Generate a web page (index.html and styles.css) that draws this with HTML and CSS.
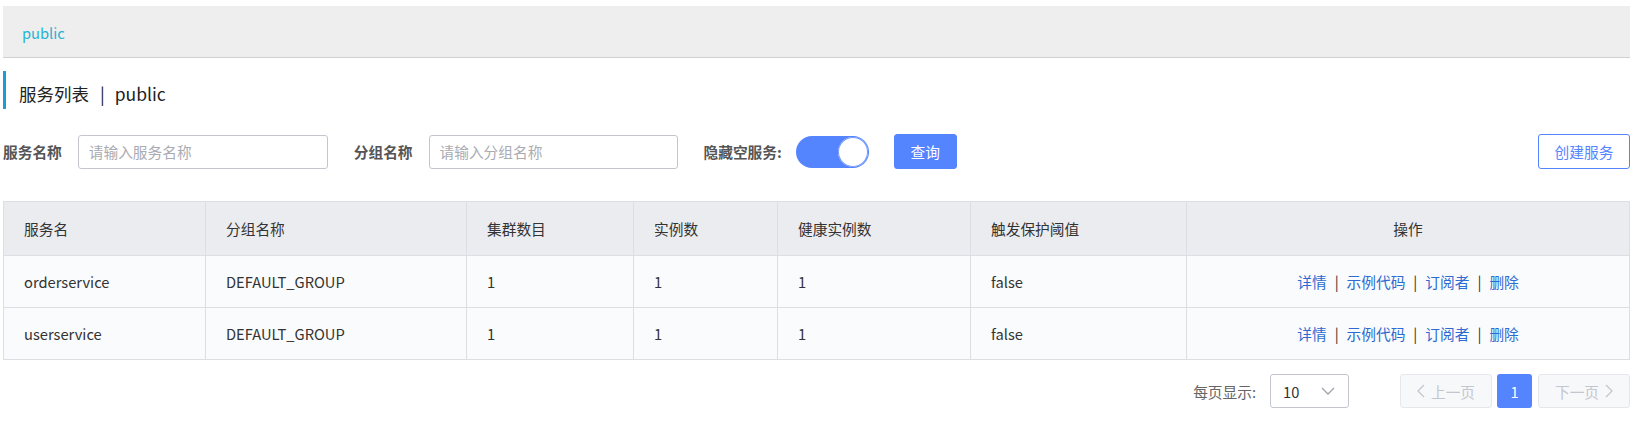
FILE: index.html
```html
<!DOCTYPE html>
<html lang="zh-CN">
<head>
<meta charset="utf-8">
<title>服务列表</title>
<link rel="stylesheet" href="styles.css">
</head>
<body>
<div class="page">
  <div class="crumb"><span class="ns">public</span></div>

  <div class="title">服务列表<span class="title-sep">|</span>public</div>

  <div class="filters">
    <div class="field">
      <span class="label">服务名称</span>
      <input class="input input-a" type="text" placeholder="请输入服务名称">
    </div>
    <div class="field">
      <span class="label">分组名称</span>
      <input class="input input-b" type="text" placeholder="请输入分组名称">
    </div>
    <div class="field field-switch">
      <span class="label">隐藏空服务:</span>
      <span class="switch"><span class="knob"></span></span>
    </div>
    <button class="btn btn-primary">查询</button>
    <div class="spacer"></div>
    <button class="btn btn-outline">创建服务</button>
  </div>

  <table class="grid">
    <colgroup>
      <col style="width:202px">
      <col style="width:261px">
      <col style="width:167px">
      <col style="width:144px">
      <col style="width:193px">
      <col style="width:216px">
      <col>
    </colgroup>
    <thead>
      <tr>
        <th>服务名</th>
        <th>分组名称</th>
        <th>集群数目</th>
        <th>实例数</th>
        <th>健康实例数</th>
        <th>触发保护阈值</th>
        <th class="center">操作</th>
      </tr>
    </thead>
    <tbody>
      <tr>
        <td>orderservice</td>
        <td>DEFAULT_GROUP</td>
        <td>1</td>
        <td>1</td>
        <td>1</td>
        <td>false</td>
        <td class="center ops"><a>详情</a><span class="bar">|</span><a>示例代码</a><span class="bar">|</span><a>订阅者</a><span class="bar">|</span><a>删除</a></td>
      </tr>
      <tr>
        <td>userservice</td>
        <td>DEFAULT_GROUP</td>
        <td>1</td>
        <td>1</td>
        <td>1</td>
        <td>false</td>
        <td class="center ops"><a>详情</a><span class="bar">|</span><a>示例代码</a><span class="bar">|</span><a>订阅者</a><span class="bar">|</span><a>删除</a></td>
      </tr>
    </tbody>
  </table>

  <div class="pager">
    <span class="pager-label">每页显示:</span>
    <div class="select">
      <span>10</span>
      <svg class="chev-down" width="14" height="8" viewBox="0 0 14 8"><polyline points="1,1 7,7 13,1" fill="none" stroke="#a0a2ad" stroke-width="1.3"/></svg>
    </div>
    <div class="pages">
      <span class="pg pg-nav disabled">
        <svg width="8" height="14" viewBox="0 0 8 14"><polyline points="7,1 1,7 7,13" fill="none" stroke="#c4c6cf" stroke-width="1.3"/></svg>
        上一页
      </span>
      <span class="pg pg-current">1</span>
      <span class="pg pg-nav disabled">
        下一页
        <svg width="8" height="14" viewBox="0 0 8 14"><polyline points="1,1 7,7 1,13" fill="none" stroke="#c4c6cf" stroke-width="1.3"/></svg>
      </span>
    </div>
  </div>
</div>
</body>
</html>
```

FILE: styles.css
```css
* { box-sizing: border-box; }

html, body {
  margin: 0;
  padding: 0;
  background: #ffffff;
}

body {
  font-family: "Noto Sans CJK SC", "Noto Sans", sans-serif;
  font-size: 14.7px;
  color: #333333;
}

.page {
  padding: 6px 12px 0 3px;
}

.crumb {
  height: 52px;
  background: #eeeeee;
  border-bottom: 1px solid #d0d0d0;
  display: flex;
  align-items: center;
  padding: 2px 0 0 19px;
}

.ns {
  color: #27b3d3;
  font-size: 14.7px;
}

.title {
  margin-top: 13px;
  height: 38px;
  border-left: 3px solid #1d9ed2;
  padding: 13px 0 0 13px;
  font-size: 17.5px;
  line-height: 20px;
  color: #222222;
}

.title-sep {
  margin: 0 10px 0 11px;
}

.filters {
  margin-top: 25px;
  display: flex;
  align-items: center;
  height: 35px;
}

.field {
  display: flex;
  align-items: center;
  gap: 16px;
  margin-right: 26px;
}

.field-switch {
  gap: 14px;
  margin-right: 25px;
}

.label {
  font-weight: bold;
  color: #555555;
  font-size: 14.7px;
  white-space: nowrap;
}

.input {
  height: 34px;
  border: 1px solid #c4c6cf;
  border-radius: 3px;
  padding: 0 10px;
  font-family: inherit;
  font-size: 14.7px;
  color: #333;
  outline: none;
  background: #fff;
}

.input::placeholder {
  color: #a9abb2;
}

.input-a { width: 250px; }
.input-b { width: 249px; }

.switch {
  width: 73px;
  height: 32px;
  border-radius: 16px;
  background: #5584ff;
  display: flex;
  align-items: center;
  justify-content: flex-end;
  padding-right: 1px;
}

.knob {
  width: 30px;
  height: 30px;
  border-radius: 50%;
  background: #ffffff;
  box-shadow: 0 0 0 1px #6f95ff inset;
}

.btn {
  height: 35px;
  border-radius: 3px;
  font-family: inherit;
  font-size: 14.7px;
  cursor: pointer;
  padding: 0;
}

.btn-primary {
  width: 63px;
  background: #5584ff;
  border: 1px solid #5584ff;
  color: #ffffff;
}

.spacer { flex: 1; }

.btn-outline {
  width: 92px;
  background: #ffffff;
  border: 1px solid #5584ff;
  color: #5584ff;
}

.grid {
  margin-top: 32px;
  width: 1627px;
  border-collapse: collapse;
  table-layout: fixed;
  border: 1px solid #dcdee3;
}

.grid th,
.grid td {
  border: 1px solid #dcdee3;
  text-align: left;
  padding: 0 0 0 20px;
  font-weight: normal;
  font-size: 14.7px;
  color: #333333;
  white-space: nowrap;
}

.grid th {
  height: 54px;
  background: #ebecf0;
}

.grid td {
  height: 52px;
  background: #fafbfc;
}

.grid .center {
  text-align: center;
  padding-left: 0;
}

.ops a {
  color: #2d6ad1;
  text-decoration: none;
}

.ops .bar {
  color: #333333;
  margin: 0 8px;
}

.pager {
  margin-top: 14px;
  width: 1627px;
  display: flex;
  align-items: center;
  justify-content: flex-end;
  height: 34px;
}

.pager-label {
  color: #666666;
  font-size: 14.7px;
  margin-right: 14px;
}

.select {
  width: 79px;
  height: 34px;
  border: 1px solid #c4c6cf;
  border-radius: 3px;
  display: flex;
  align-items: center;
  justify-content: space-between;
  padding: 0 13px 0 12px;
  color: #333333;
  margin-right: 51px;
}

.pages {
  display: flex;
  align-items: center;
}

.pg {
  height: 34px;
  border-radius: 3px;
  display: flex;
  align-items: center;
  justify-content: center;
  font-size: 14.7px;
}

.pg-nav {
  width: 92px;
  gap: 6px;
  background: #f7f8fa;
  border: 1px solid #e6e7eb;
  color: #c4c6cf;
}

.pg-current {
  width: 35px;
  margin: 0 6px 0 5px;
  background: #5584ff;
  color: #ffffff;
}
```
